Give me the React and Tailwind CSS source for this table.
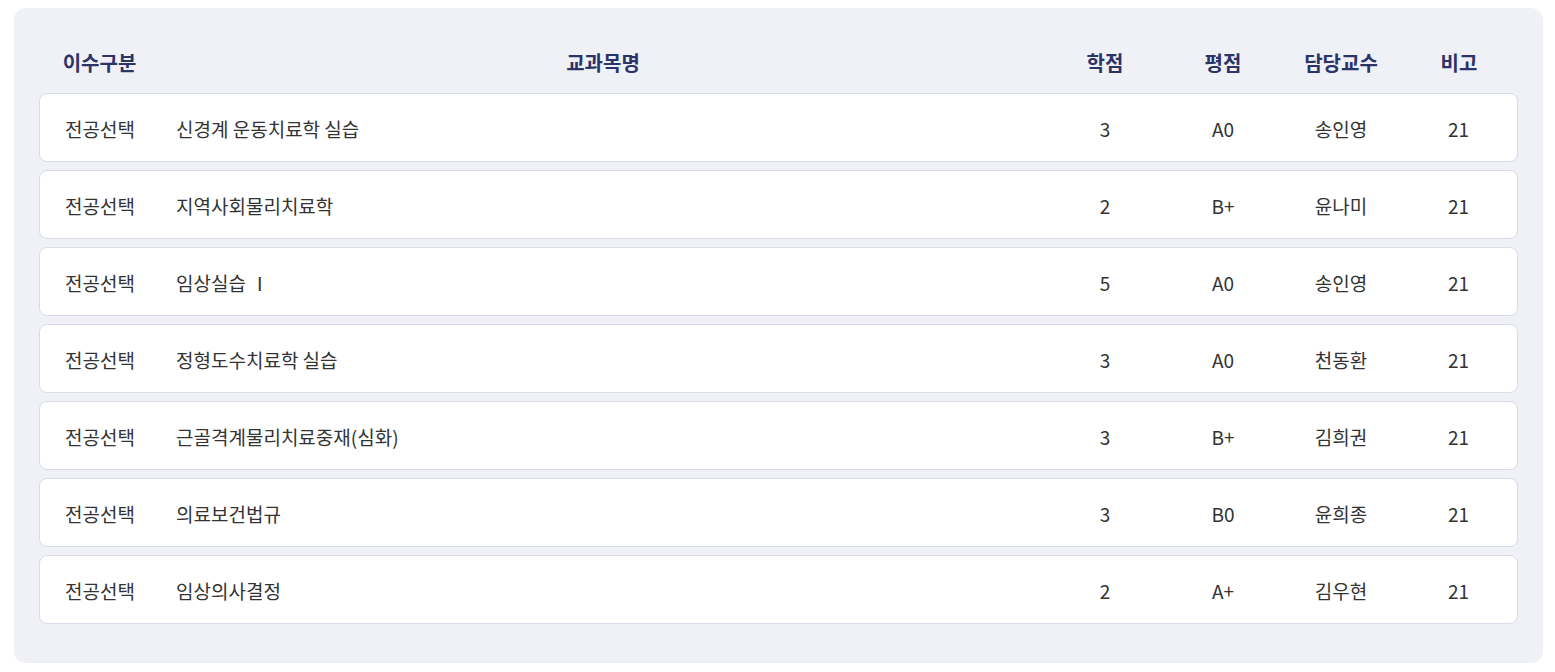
const rows = [
  { type: '전공선택', name: '신경계 운동치료학 실습', credit: 3, grade: 'A0', prof: '송인영', note: 21 },
  { type: '전공선택', name: '지역사회물리치료학', credit: 2, grade: 'B+', prof: '윤나미', note: 21 },
  { type: '전공선택', name: '임상실습 Ⅰ', credit: 5, grade: 'A0', prof: '송인영', note: 21 },
  { type: '전공선택', name: '정형도수치료학 실습', credit: 3, grade: 'A0', prof: '천동환', note: 21 },
  { type: '전공선택', name: '근골격계물리치료중재(심화)', credit: 3, grade: 'B+', prof: '김희권', note: 21 },
  { type: '전공선택', name: '의료보건법규', credit: 3, grade: 'B0', prof: '윤희종', note: 21 },
  { type: '전공선택', name: '임상의사결정', credit: 2, grade: 'A+', prof: '김우현', note: 21 },
]

export default function App() {
  return (
    <div className="min-h-screen bg-white pt-[8px] pl-[14px] pr-[12px]" style={{ fontFamily: '"Noto Sans CJK KR", "Noto Sans", sans-serif' }}>
      <div className="rounded-xl bg-[#f0f1f7] px-[25px] pt-[30px] pb-[39px]">
        <div className="flex h-[50px] items-center text-[20px] font-bold text-[#2b3467]">
          <div className="w-[121px] text-center">이수구분</div>
          <div className="flex-1 text-center">교과목명</div>
          <div className="w-[118px] text-center">학점</div>
          <div className="w-[118px] text-center">평점</div>
          <div className="w-[118px] text-center">담당교수</div>
          <div className="w-[118px] text-center">비고</div>
        </div>
        <div className="mt-[5px] flex flex-col gap-2">
          {rows.map((r, i) => (
            <div key={i} className="flex h-[69px] items-center rounded-lg border border-[#d9dbea] bg-white pt-[3px] text-[19px] text-[#333]">
              <div className="w-[120px] text-center">{r.type}</div>
              <div className="flex-1 pl-[16px]">{r.name}</div>
              <div className="w-[118px] text-center">{r.credit}</div>
              <div className="w-[118px] text-center">{r.grade}</div>
              <div className="w-[118px] text-center">{r.prof}</div>
              <div className="w-[117px] text-center">{r.note}</div>
            </div>
          ))}
        </div>
      </div>
    </div>
  )
}
